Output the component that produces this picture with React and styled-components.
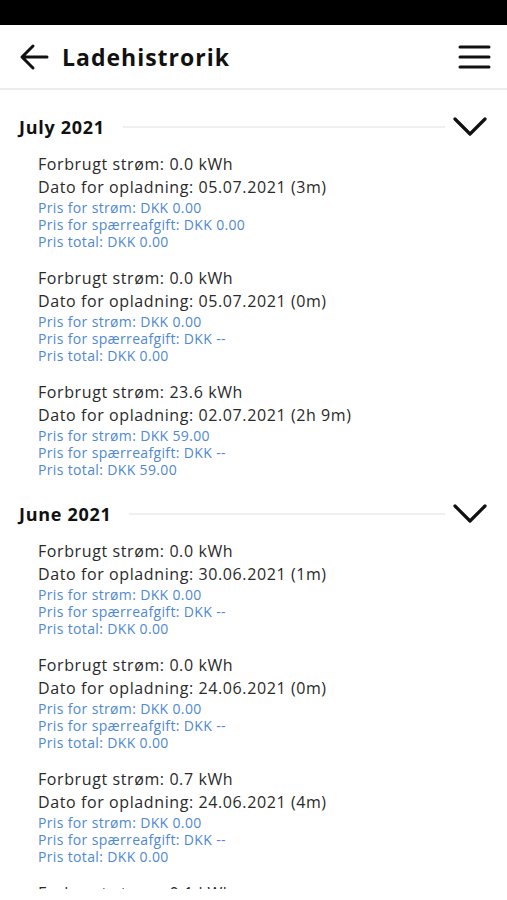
import React from "react";
import styled, { createGlobalStyle } from "styled-components";

const Global = createGlobalStyle`
  html, body { margin: 0; padding: 0; background: #fff; }
  body { font-family: "Open Sans", "DejaVu Sans", sans-serif; color: #1f1f1f; overflow: hidden; }
`;

const Page = styled.div`
  width: 507px;
  height: 900px;
  overflow: hidden;
  display: flex;
  flex-direction: column;
  background: #fff;
`;

const StatusBar = styled.div`
  height: 25px;
  background: #000;
  flex-shrink: 0;
`;

const Header = styled.header`
  height: 65px;
  flex-shrink: 0;
  display: flex;
  align-items: center;
  padding: 0 16px 0 19px;
  border-bottom: 2px solid #ececec;
  box-sizing: border-box;
`;

const Title = styled.h1`
  margin: 0 0 0 13px;
  font-size: 23px;
  font-weight: 700;
  color: #111;
  flex: 1;
  letter-spacing: 1px;
`;

const IconButton = styled.div`
  display: flex;
  align-items: center;
  justify-content: center;
`;

const Content = styled.main`
  height: 799px;
  overflow: hidden;
  display: flex;
  flex-direction: column;
  padding: 1px 0 0;
  box-sizing: border-box;
`;

const Section = styled.section`
  display: flex;
  flex-direction: column;
  padding-top: 18px;
`;

const SectionHead = styled.div`
  height: 36px;
  display: flex;
  align-items: center;
  padding: 0 20px 0 19px;
`;

const SectionTitle = styled.h2`
  margin: 0;
  font-size: 18px;
  font-weight: 700;
  color: #111;
  letter-spacing: 0.7px;
`;

const Rule = styled.div`
  flex: 1;
  height: 2px;
  background: #efefef;
  margin: 0 8px 0 ${(p) => p.$gap || 18}px;
`;

const Entries = styled.div`
  display: flex;
  flex-direction: column;
  gap: 17px;
  padding: 8px 0 0 38px;
`;

const Entry = styled.div`
  display: flex;
  flex-direction: column;
`;

const Main = styled.div`
  font-size: 16px;
  line-height: 23px;
  color: #2a2a2a;
  letter-spacing: 0.6px;
  white-space: nowrap;
`;

const Sub = styled.div`
  font-size: 14px;
  line-height: 17px;
  color: #4f88d4;
  letter-spacing: 0.35px;
  white-space: nowrap;
`;

const BackIcon = () => (
  <svg width="30" height="30" viewBox="0 0 30 30" fill="none" stroke="#111" strokeWidth="3" strokeLinecap="round" strokeLinejoin="round">
    <path d="M28 15H3M14 4L3 15l11 11" />
  </svg>
);

const MenuIcon = () => (
  <svg width="33" height="24" viewBox="0 0 33 24" fill="none" stroke="#111" strokeWidth="3" strokeLinecap="round">
    <path d="M2 2h29M2 12h29M2 22h29" />
  </svg>
);

const Chevron = () => (
  <svg width="34" height="20" viewBox="0 0 34 20" fill="none" stroke="#111" strokeWidth="3.2" strokeLinecap="round" strokeLinejoin="round">
    <path d="M2 2l15 15L32 2" />
  </svg>
);

const data = [
  {
    month: "July 2021",
    gap: 18,
    entries: [
      ["0.0", "05.07.2021 (3m)", "0.00", "0.00", "0.00"],
      ["0.0", "05.07.2021 (0m)", "0.00", "--", "0.00"],
      ["23.6", "02.07.2021 (2h 9m)", "59.00", "--", "59.00"],
    ],
  },
  {
    month: "June 2021",
    gap: 18,
    entries: [
      ["0.0", "30.06.2021 (1m)", "0.00", "--", "0.00"],
      ["0.0", "24.06.2021 (0m)", "0.00", "--", "0.00"],
      ["0.7", "24.06.2021 (4m)", "0.00", "--", "0.00"],
      ["0.1", "23.06.2021 (1m)", "0.00", "--", "0.00"],
    ],
  },
];

export default function App() {
  return (
    <Page>
      <Global />
      <StatusBar />
      <Header>
        <IconButton><BackIcon /></IconButton>
        <Title>Ladehistrorik</Title>
        <IconButton><MenuIcon /></IconButton>
      </Header>
      <Content>
        {data.map((s) => (
          <Section key={s.month}>
            <SectionHead>
              <SectionTitle>{s.month}</SectionTitle>
              <Rule $gap={s.gap} />
              <Chevron />
            </SectionHead>
            <Entries>
              {s.entries.map((e, i) => (
                <Entry key={i}>
                  <Main>Forbrugt strøm: {e[0]} kWh</Main>
                  <Main>Dato for opladning: {e[1]}</Main>
                  <Sub>Pris for strøm: DKK {e[2]}</Sub>
                  <Sub>Pris for spærreafgift: DKK {e[3]}</Sub>
                  <Sub>Pris total: DKK {e[4]}</Sub>
                </Entry>
              ))}
            </Entries>
          </Section>
        ))}
      </Content>
    </Page>
  );
}
